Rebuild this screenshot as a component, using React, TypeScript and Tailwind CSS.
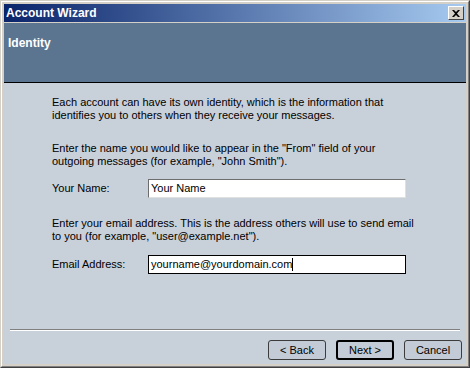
import React from "react";

const font = { fontFamily: '"Liberation Sans", Arial, sans-serif' };

function WizButton({ label, isDefault }: { label: string; isDefault?: boolean }) {
    return (
        <button
            className={
                "w-[58px] h-[20px] rounded-[3px] bg-[#c2cbd6] text-[11px] text-black flex items-center justify-center " +
                (isDefault ? "border-2 border-black" : "border border-[#3c3c3c]")
            }
        >
            {label}
        </button>
    );
}

export default function App() {
    return (
        <div className="w-[470px] h-[368px] text-black" style={font}>
            <div className="w-full h-full border-t border-l border-r border-b border-t-[#d4d0c8] border-l-[#d4d0c8] border-r-[#404040] border-b-[#404040]">
                <div className="w-full h-full border border-t-white border-l-white border-r-[#808080] border-b-[#808080] bg-[#d4d0c8] p-[2px] flex flex-col">
                    {/* title bar */}
                    <div className="h-[18px] flex items-center justify-between pl-[2px] pr-[2px] bg-[linear-gradient(to_right,#0a246a,#a6caf0)]">
                        <span className="text-white font-bold text-[12px] leading-none">Account Wizard</span>
                        <div className="w-[16px] h-[14px] bg-[#d4d0c8] border border-t-white border-l-white border-r-[#404040] border-b-[#404040] flex items-center justify-center">
                            <svg width="8" height="7" viewBox="0 0 8 7">
                                <path d="M0 0h2l2 2 2-2h2L5 3.5 8 7H6L4 5 2 7H0l3-3.5z" fill="black" />
                            </svg>
                        </div>
                    </div>
                    <div className="h-[1px]" />

                    {/* header band */}
                    <div className="h-[60px] bg-[#5b7591] border-b border-black px-[4px] pt-[7px]">
                        <span className="text-white font-bold text-[12px]">Identity</span>
                    </div>

                    {/* body */}
                    <div className="flex-1 bg-[#c8d0da] flex flex-col">
                        <div className="pl-[48px] pr-[52px] pt-[13px] text-[11px] leading-[13px] flex flex-col">
                            <p>
                                Each account can have its own identity, which is the information that
                                identifies you to others when they receive your messages.
                            </p>
                            <p className="mt-[20px]">
                                Enter the name you would like to appear in the "From" field of your
                                outgoing messages (for example, "John Smith").
                            </p>
                            <div className="mt-[11px] flex items-center">
                                <span className="w-[96px]">Your Name:</span>
                                <div className="w-[258px] h-[19px] bg-white border border-t-[#6d6d6d] border-l-[#6d6d6d] border-r-[#e0e0e0] border-b-[#e0e0e0] flex items-center px-[2px]">
                                    Your Name
                                </div>
                            </div>
                            <p className="mt-[19px]">
                                Enter your email address. This is the address others will use to send email
                                to you (for example, "user@example.net").
                            </p>
                            <div className="mt-[12px] flex items-center">
                                <span className="w-[96px]">Email Address:</span>
                                <div className="w-[258px] h-[19px] bg-white border border-black flex items-center px-[2px]">
                                    yourname@yourdomain.com
                                    <span className="w-[1px] h-[13px] bg-black" />
                                </div>
                            </div>
                        </div>
                        <div className="flex-1" />
                        <div className="mx-[6px] border-t border-t-[#808080] border-b border-b-white" />
                        <div className="flex justify-end gap-[10px] pr-[4px] pt-[9px] pb-[4px]">
                            <WizButton label="< Back" />
                            <WizButton label="Next >" isDefault />
                            <WizButton label="Cancel" />
                        </div>
                    </div>
                </div>
            </div>
        </div>
    );
}
